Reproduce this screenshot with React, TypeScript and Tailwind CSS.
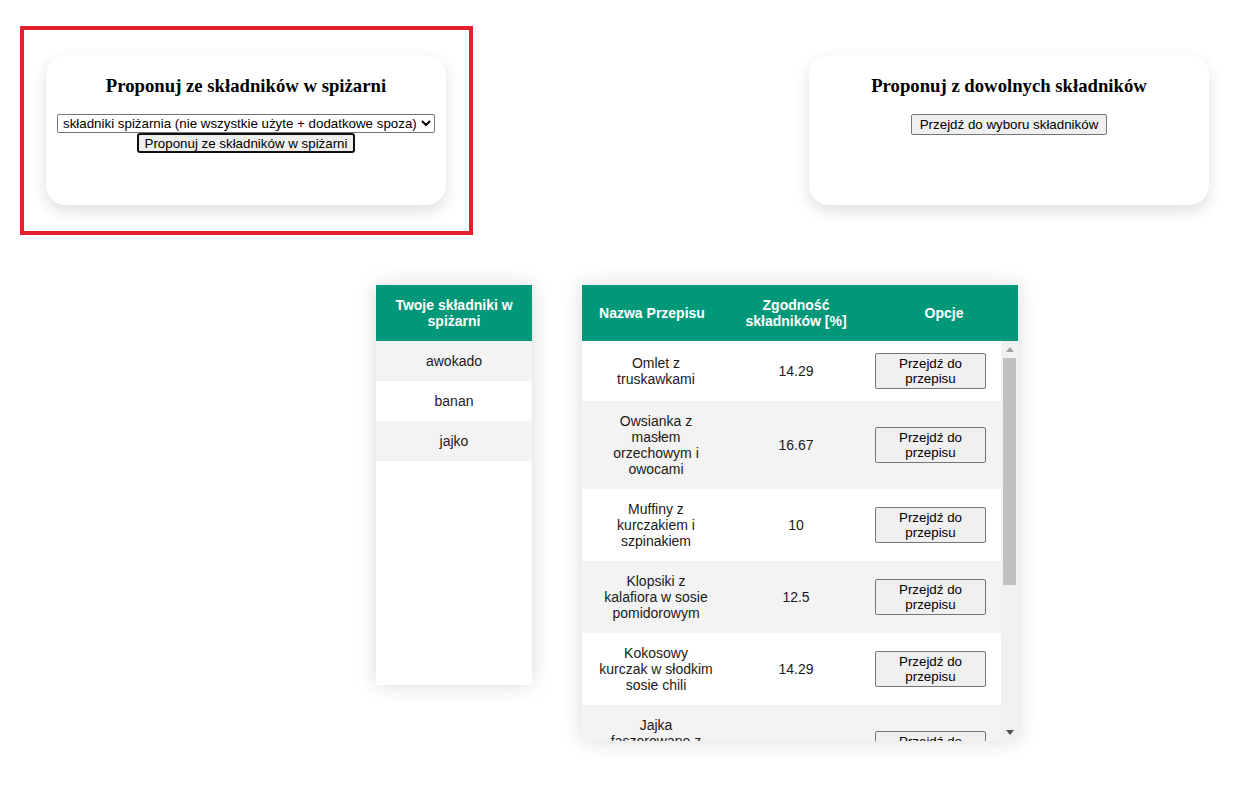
import React from 'react';

const pantry = ['awokado', 'banan', 'jajko'];

// lines are split as in the app's narrow first column
const recipes = [
  { lines: ['Omlet z', 'truskawkami'], score: '14.29' },
  { lines: ['Owsianka z', 'masłem', 'orzechowym i', 'owocami'], score: '16.67' },
  { lines: ['Muffiny z', 'kurczakiem i', 'szpinakiem'], score: '10' },
  { lines: ['Klopsiki z', 'kalafiora w sosie', 'pomidorowym'], score: '12.5' },
  { lines: ['Kokosowy', 'kurczak w słodkim', 'sosie chili'], score: '14.29' },
  { lines: ['Jajka', 'faszerowane z', 'tuńczykiem i', 'awokado'], score: '33.33' },
  { lines: ['Koktajl', 'bananowy'], score: '20' },
  { lines: ['Sałatka z', 'awokado i', 'jajkiem'], score: '28.57' },
  { lines: ['Placuszki', 'bananowe'], score: '25' },
];

function Card({ title, children }: { title: string; children: React.ReactNode }) {
  return (
    <div className="flex h-[150px] w-[400px] flex-col items-center rounded-[20px] bg-white p-5 shadow-[0_6px_16px_rgba(0,0,0,0.13)]">
      <h3 className="mb-[18px] font-['Liberation_Serif',serif] text-[18.72px] leading-[21px] font-bold text-black">
        {title}
      </h3>
      {children}
    </div>
  );
}

function Scrollbar() {
  return (
    <div className="flex h-full w-[17px] flex-col bg-[#f1f1f1]">
      <div className="flex h-[17px] items-center justify-center">
        <svg width="8" height="5" viewBox="0 0 8 5">
          <path d="M0 5 L4 0 L8 5 Z" fill="#a3a3a3" />
        </svg>
      </div>
      <div className="flex-1 px-[2px]">
        <div className="h-[227px] w-full bg-[#c1c1c1]" />
      </div>
      <div className="flex h-[17px] items-center justify-center">
        <svg width="8" height="5" viewBox="0 0 8 5">
          <path d="M0 0 L8 0 L4 5 Z" fill="#505050" />
        </svg>
      </div>
    </div>
  );
}

export default function App() {
  return (
    <div className="min-h-[788px] w-[1260px] bg-white font-['Liberation_Sans',Arial,sans-serif] text-[#1a1a1a]">
      {/* top cards */}
      <div className="flex items-start justify-between pt-[26px] pr-[51px] pl-[20px]">
        <div className="border-4 border-[#e3202b] pt-[25px] pr-[23px] pb-[26px] pl-[22px]">
          <Card title="Proponuj ze składników w spiżarni">
            <select className="h-[19px] w-[378px] rounded-[2px] border border-[#767676] bg-white pl-[1px] text-[13.33px] text-black">
              <option>składniki spiżarnia (nie wszystkie użyte + dodatkowe spoza)</option>
            </select>
            <button className="h-[20px] rounded-[3px] border-2 border-[#101010] bg-[#efefef] px-[6px] text-[13.33px] leading-[15px] text-black">
              Proponuj ze składników w spiżarni
            </button>
          </Card>
        </div>
        <div className="mt-[29px]">
          <Card title="Proponuj z dowolnych składników">
            <button className="h-[21px] rounded-[2px] border border-[#767676] bg-[#efefef] px-[8px] text-[13.33px] leading-[15px] text-black">
              Przejdź do wyboru składników
            </button>
          </Card>
        </div>
      </div>

      {/* tables */}
      <div className="mt-[50px] flex items-start gap-[50px] pl-[376px]">
        <div className="h-[400px] w-[156px] bg-white text-[14px] leading-4 shadow-[0_0_20px_rgba(0,0,0,0.15)]">
          <div className="bg-[#009879] px-3 py-3 text-center font-bold text-white">Twoje składniki w spiżarni</div>
          {pantry.map((p, i) => (
            <div key={p} className={`px-3 py-3 text-center ${i % 2 === 0 ? 'bg-[#f3f3f3]' : 'bg-white'}`}>
              {p}
            </div>
          ))}
        </div>

        <div className="w-[436px] bg-white text-[14px] leading-4 shadow-[0_0_20px_rgba(0,0,0,0.15)]">
          <div className="flex h-[56px] items-center bg-[#009879] text-center font-bold text-white">
            <div className="w-[140px] px-3">Nazwa Przepisu</div>
            <div className="w-[148px] px-3">Zgodność składników [%]</div>
            <div className="w-[148px] px-3">Opcje</div>
          </div>
          <div className="flex h-[400px]">
            <div className="w-[419px] overflow-y-auto [scrollbar-width:none]">
              {recipes.map((r, i) => (
                <div key={r.lines.join(' ')} className={`flex items-center text-center ${i % 2 === 1 ? 'bg-[#f3f3f3]' : 'bg-white'}`}>
                  <div className="w-[140px] py-3 pl-[8px]">
                    {r.lines.map((l) => (
                      <div key={l} className="whitespace-nowrap">{l}</div>
                    ))}
                  </div>
                  <div className="w-[148px] py-3">{r.score}</div>
                  <div className="flex w-[131px] py-3 pl-[5px]">
                    <button className="h-[36px] w-[111px] rounded-[2px] border border-[#767676] bg-[#efefef] text-[13.33px] leading-[15px] text-black">
                      Przejdź do przepisu
                    </button>
                  </div>
                </div>
              ))}
            </div>
            <Scrollbar />
          </div>
        </div>
      </div>
    </div>
  );
}
